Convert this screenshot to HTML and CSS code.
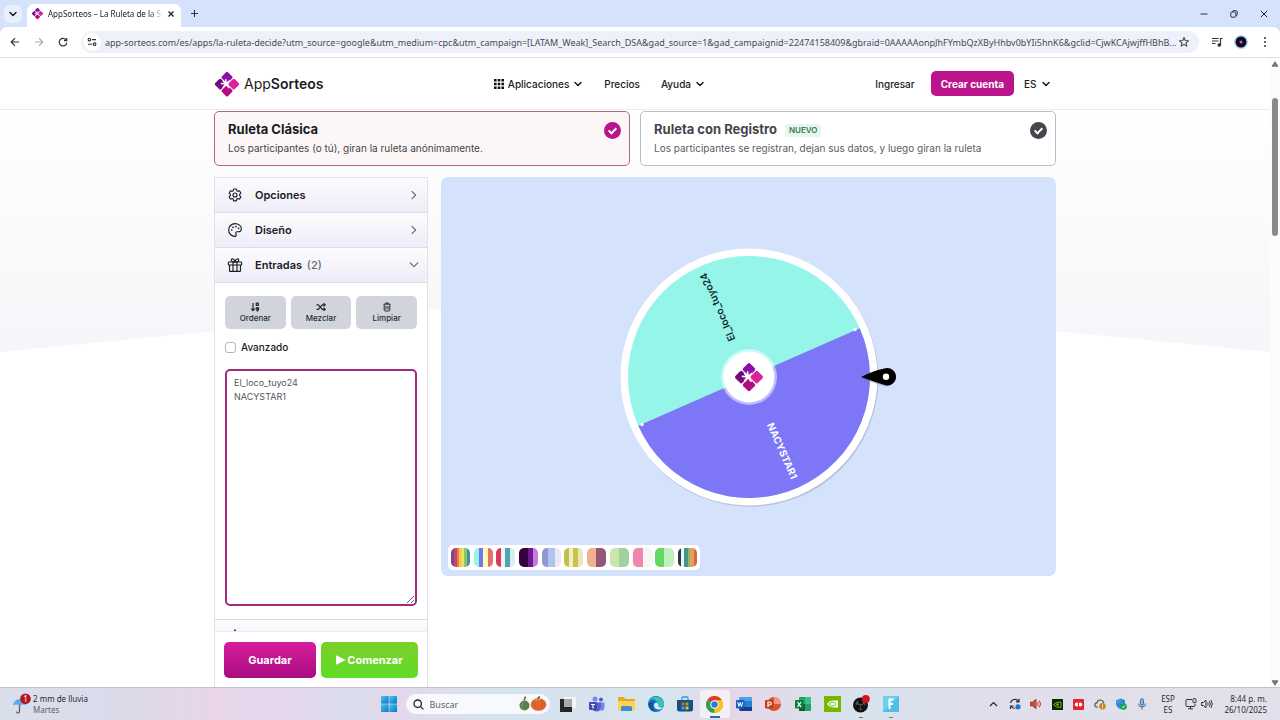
FILE: index.html
```html
<!DOCTYPE html>
<html lang="es">
<head>
<meta charset="utf-8">
<title>AppSorteos – La Ruleta de la Suerte</title>
<link rel="stylesheet" href="styles.css">
</head>
<body>
<svg class="defs" aria-hidden="true">
  <defs>
    <linearGradient id="g-top" x1="0" y1="0" x2="1" y2="1"><stop offset="0" stop-color="#7d0aa0"/><stop offset="1" stop-color="#a312b4"/></linearGradient>
    <linearGradient id="g-left" x1="0" y1="0" x2="1" y2="1"><stop offset="0" stop-color="#5c0a73"/><stop offset="1" stop-color="#8c0d86"/></linearGradient>
    <linearGradient id="g-blue" x1="0" y1="0" x2="1" y2="1"><stop offset="0" stop-color="#45c8f1"/><stop offset="1" stop-color="#0a74c8"/></linearGradient>
    <symbol id="logo" viewBox="0 0 28 28">
      <g transform="rotate(45 14 14)">
        <rect x="5" y="5" width="8.6" height="8.6" rx="1.6" fill="url(#g-top)"/>
        <rect x="14.6" y="5" width="8.6" height="8.6" rx="1.6" fill="#dc229c"/>
        <rect x="5" y="14.6" width="8.6" height="8.6" rx="1.6" fill="url(#g-left)"/>
        <rect x="14.6" y="14.6" width="8.6" height="8.6" rx="1.6" fill="#b20c82"/>
      </g>
      <path d="M12.8 14V9.8M12.8 14l3.4-3M12.8 14l3 3.6M12.8 14l-2.600 3.400M12.8 14l-4.4-.6M12.8 14l-2.600-3" stroke="#fff" stroke-width="1.5" stroke-linecap="round" fill="none"/>
    </symbol>
    <symbol id="chev-down" viewBox="0 0 10 10"><path d="M2 3.5 5 6.5 8 3.5" fill="none" stroke="currentColor" stroke-width="1.5" stroke-linecap="round" stroke-linejoin="round"/></symbol>
    <symbol id="chev-thin" viewBox="0 0 12 12"><path d="M4 2.300 7.700 6 4 9.700" fill="none" stroke="currentColor" stroke-width="1.1" stroke-linecap="round" stroke-linejoin="round"/></symbol>
  </defs>
</svg>

<header class="browser">
  <div class="tabstrip">
    <button class="tab-search" aria-label="Buscar pestañas"><svg width="10" height="10"><use href="#chev-down"/></svg></button>
    <div class="tab">
      <svg width="13" height="13"><use href="#logo"/></svg>
      <span class="tab-title">AppSorteos – La Ruleta de la Su</span>
      <button class="plain" aria-label="Cerrar pestaña"><svg width="8" height="8" viewBox="0 0 8 8"><path d="M1.5 1.5l5 5M6.5 1.5l-5 5" stroke="#222" stroke-width="1.3"/></svg></button>
    </div>
    <button class="plain new-tab" aria-label="Nueva pestaña"><svg width="9" height="9" viewBox="0 0 9 9"><path d="M4.5 1v7M1 4.5h7" stroke="#333" stroke-width="1.1"/></svg></button>
    <div class="win-controls">
      <button class="plain" aria-label="Minimizar"><svg width="8" height="8" viewBox="0 0 8 8"><path d="M.5 4h7" stroke="#333"/></svg></button>
      <button class="plain" aria-label="Restaurar"><svg width="8" height="8" viewBox="0 0 8 8" fill="none" stroke="#333"><rect x=".8" y="2" width="5" height="5.2" rx="1"/><path d="M2.5 1.8Q2.6.6 4 .6h1.5q1.8 0 1.8 1.8V4q0 1.5-1.3 1.6"/></svg></button>
      <button class="plain" aria-label="Cerrar"><svg width="8" height="8" viewBox="0 0 8 8"><path d="M.8.8l6.4 6.4M7.2.8L.8 7.2" stroke="#222"/></svg></button>
    </div>
  </div>
  <div class="toolbar">
    <div class="nav-buttons">
      <button class="plain" aria-label="Atrás"><svg width="10" height="10" viewBox="0 0 10 10"><path d="M9 5H1.4M5 1.2 1.2 5 5 8.8" fill="none" stroke="#333" stroke-width="1.2"/></svg></button>
      <button class="plain" aria-label="Adelante"><svg width="10" height="10" viewBox="0 0 10 10"><path d="M1 5h7.6M5 1.2 8.8 5 5 8.8" fill="none" stroke="#aaa" stroke-width="1.1"/></svg></button>
      <button class="plain" aria-label="Recargar"><svg width="10" height="10" viewBox="0 0 10 10"><path d="M8.3 3.2A3.8 3.8 0 1 0 8.8 5.6M8.7 1v2.7H6" fill="none" stroke="#333" stroke-width="1.2"/></svg></button>
    </div>
    <div class="omnibox">
      <span class="site-info"><svg width="10" height="10" viewBox="0 0 10 10" fill="none" stroke="#333" stroke-width="1.1"><circle cx="2.4" cy="2.6" r="1.3"/><path d="M5 2.6h4M1 7.2h4"/><circle cx="7.6" cy="7.2" r="1.3"/></svg></span>
      <input class="url" type="text" aria-label="Dirección" value="app-sorteos.com/es/apps/la-ruleta-decide?utm_source=google&amp;utm_medium=cpc&amp;utm_campaign=[LATAM_Weak]_Search_DSA&amp;gad_source=1&amp;gad_campaignid=22474158409&amp;gbraid=0AAAAAonpJhFYmbQzXByHhbv0bYIi5hnK6&amp;gclid=CjwKCAjwjffHBhB...">
      <button class="plain" aria-label="Marcador"><svg width="12" height="12" viewBox="0 0 12 12"><path d="M6 1.5l1.3 3 3.2.3-2.4 2.1.7 3.2L6 8.4l-2.8 1.7.7-3.2L1.500 4.800l3.200-.3z" fill="none" stroke="#444" stroke-width="1.1" stroke-linejoin="round"/></svg></button>
    </div>
    <div class="tool-icons">
      <button class="plain" aria-label="Multimedia"><svg width="12" height="12" viewBox="0 0 12 12" fill="none" stroke="#333" stroke-width="1.2"><path d="M1 2.500h6.500M1 5h6.500M1 7.500h3.500M9.500 9V2.500h2"/><circle cx="8.300" cy="9" r="1.200" fill="#333"/></svg></button>
      <button class="plain" aria-label="Perfil"><svg width="14" height="14" viewBox="0 0 14 14"><circle cx="7" cy="7" r="7" fill="#bcd3f4"/><circle cx="7" cy="7" r="5.500" fill="#0b0b22"/><circle cx="7" cy="7" r="1.500" fill="#e25a8a"/></svg></button>
      <button class="plain" aria-label="Menú"><svg width="12" height="12" viewBox="0 0 12 12" fill="#333"><circle cx="6" cy="2" r="1"/><circle cx="6" cy="6" r="1"/><circle cx="6" cy="10" r="1"/></svg></button>
    </div>
  </div>
</header>

<div class="viewport">
  <div class="page">
    <header class="site-header">
      <div class="container site-bar">
        <a class="brand" href="#"><svg width="26" height="26" viewBox="1 1 26 26"><use href="#logo" width="28" height="28"/></svg><span>App<b>Sorteos</b></span></a>
        <nav class="site-nav">
          <a href="#"><svg width="10" height="10" viewBox="0 0 10 10" fill="#111"><path d="M0 0h2.600v2.600H0zM3.700 0h2.600v2.600H3.700zM7.400 0H10v2.600H7.400zM0 3.700h2.600v2.600H0zM3.700 3.700h2.600v2.600H3.700zM7.400 3.700H10v2.600H7.400zM0 7.400h2.600V10H0zM3.700 7.400h2.600V10H3.700zM7.400 7.400H10V10H7.400z"/></svg>Aplicaciones<svg width="10" height="10"><use href="#chev-down"/></svg></a>
          <a href="#">Precios</a>
          <a href="#">Ayuda<svg width="10" height="10"><use href="#chev-down"/></svg></a>
        </nav>
        <div class="account">
          <a href="#">Ingresar</a>
          <button class="signup">Crear cuenta</button>
          <label class="lang"><select aria-label="Idioma"><option>ES</option></select><svg width="10" height="10"><use href="#chev-down"/></svg></label>
        </div>
      </div>
    </header>

    <main class="container content">
      <div class="modes">
        <label class="mode mode-active">
          <span class="mode-text"><span class="mode-title">Ruleta Clásica</span><span class="mode-desc">Los participantes (o tú), giran la ruleta anónimamente.</span></span>
          <input type="radio" name="mode" checked>
        </label>
        <label class="mode">
          <span class="mode-text"><span class="mode-title">Ruleta con Registro <span class="tag">NUEVO</span></span><span class="mode-desc">Los participantes se registran, dejan sus datos, y luego giran la ruleta</span></span>
          <input type="radio" name="mode">
        </label>
      </div>

      <div class="workspace">
        <aside class="sidebar">
          <div class="sections">
            <button class="section" aria-expanded="false">
              <svg width="16" height="16" viewBox="0 0 24 24" fill="none" stroke="currentColor" stroke-width="1.700" stroke-linejoin="round"><path d="M9.600 3.900c.1-.5.500-.9 1.100-.9h2.600c.5 0 1 .4 1.100.9l.2 1.300c.1.400.3.700.6.900l.3.100c.3.200.7.200 1.100.1l1.200-.5c.5-.2 1.100 0 1.400.5l1.300 2.200c.3.500.2 1.100-.3 1.400l-1 .8c-.3.300-.4.600-.4 1v.300c0 .400.100.700.400 1l1 .8c.4.400.5 1 .3 1.400l-1.300 2.300c-.3.500-.9.700-1.400.5l-1.200-.5c-.4-.1-.8-.1-1.100.1l-.3.100c-.3.200-.6.500-.6.900l-.2 1.300c-.1.500-.6.900-1.100.9h-2.600c-.6 0-1-.4-1.100-.9l-.2-1.300c-.1-.4-.3-.7-.6-.9l-.3-.1c-.3-.2-.7-.2-1.100-.1l-1.200.5c-.5.200-1.100 0-1.400-.5l-1.300-2.300c-.3-.4-.2-1 .3-1.400l1-.8c.3-.3.400-.6.400-1v-.300c0-.4-.1-.7-.4-1l-1-.8c-.4-.3-.5-.9-.3-1.400l1.300-2.200c.3-.5.900-.7 1.400-.5l1.200.5c.4.100.8.100 1.100-.1l.3-.1c.3-.2.600-.5.600-.9z"/><circle cx="12" cy="12" r="3"/></svg>
              <span>Opciones</span><svg class="arrow" width="12" height="12"><use href="#chev-thin"/></svg>
            </button>
            <button class="section" aria-expanded="false">
              <svg width="16" height="16" viewBox="0 0 24 24" fill="none" stroke="currentColor" stroke-width="1.700" stroke-linejoin="round"><path d="M12 21.500C6.500 21.500 2.500 17.300 2.500 12S6.800 2.500 12 2.500s9.500 3.400 9.500 7.600c0 2.700-1.900 4.600-4.700 4.600H15c-1.500 0-2.200 1.100-1.800 2.300.3 1 .8 1.600.5 2.900-.2 1-.8 1.600-1.700 1.600z"/><g fill="currentColor" stroke="none"><circle cx="7" cy="12" r="1.300"/><circle cx="9" cy="8" r="1.300"/><circle cx="13.500" cy="6.800" r="1.300"/><circle cx="17.300" cy="9.500" r="1.300"/></g></svg>
              <span>Diseño</span><svg class="arrow" width="12" height="12"><use href="#chev-thin"/></svg>
            </button>
            <button class="section" aria-expanded="true">
              <svg width="16" height="16" viewBox="0 0 24 24" fill="none" stroke="currentColor" stroke-width="1.700" stroke-linejoin="round"><rect x="2" y="7.500" width="20" height="4.500" rx="1"/><path d="M3.800 12v8.500q0 1 1 1h14.400q1 0 1-1V12M9 7.500v14M15 7.500v14M12 7.500C7 7.500 6 5.500 6.500 4S11 1.500 12 7.500c1-6 5-5 5.500-3.500S17 7.500 12 7.500z"/></svg>
              <span>Entradas <span class="count">(2)</span></span><svg class="arrow open" width="12" height="12"><use href="#chev-thin"/></svg>
            </button>
            <div class="entries">
              <div class="actions">
                <button><svg width="10" height="10" viewBox="0 0 10 10" fill="none" stroke="#1f2937" stroke-width="1.200"><path d="M3 1v7.500M1.200 6.600 3 8.600l1.800-2"/><rect x="6.300" y="1.200" width="2" height="2.200"/><path d="M6.300 8.800h1q1.200 0 1.200-1.300V5.800H6.300v1.400h2"/></svg>Ordenar</button>
                <button><svg width="10" height="10" viewBox="0 0 10 10" fill="none" stroke="#1f2937" stroke-width="1.200"><path d="M.5 2.800h1.800l4 4.500h2.500M.5 7.300h1.800l4-4.500h2.500M7.600 1.200l1.600 1.600-1.600 1.600M7.600 5.700l1.600 1.600-1.600 1.600"/></svg>Mezclar</button>
                <button><svg width="10" height="10" viewBox="0 0 10 10" fill="none" stroke="#1f2937"><path d="M1.500 2.200h7M3.600 2V1h2.800v1M2.200 2.500V8q0 1 1 1h3.600q1 0 1-1V2.500M4 4v3.500M6 4v3.500"/></svg>Limpiar</button>
              </div>
              <label class="advanced"><input type="checkbox">Avanzado</label>
              <textarea aria-label="Entradas" spellcheck="false">El_loco_tuyo24
NACYSTAR1</textarea>
            </div>
            <button class="section section-next" aria-expanded="false">
              <svg width="16" height="16" viewBox="0 0 24 24" fill="none" stroke="currentColor" stroke-width="1.700"><path d="M12 1.500l3 6.500 7 .8-5.200 4.700 1.400 7L12 17l-6.200 3.500 1.400-7L2 8.800 9 8z"/></svg>
              <span>Resultados <span class="count">(0)</span></span>
            </button>
          </div>
          <div class="footer-actions">
            <button class="save">Guardar</button>
            <button class="start"><svg width="9" height="10" viewBox="0 0 9 10"><path d="M.5.8v8.400L8.600 5z" fill="#fff" stroke="#fff" stroke-linejoin="round"/></svg>Comenzar</button>
          </div>
        </aside>

        <section class="stage" aria-label="Ruleta">
          <svg class="wheel" width="300" height="268" viewBox="-150 -134 300 268">
            <circle cx="1" cy="1.300" r="128.500" fill="#8d9bb5" opacity=".45"/>
            <circle r="128.500" fill="#fff"/>
            <circle r="121" fill="#95f5e9"/>
            <path d="M-110.710 48.830A121 121 0 0 0 110.710-48.830z" fill="#7d77f8"/>
            <circle cx="-107" cy="47.500" r="1.700" fill="#fff"/><circle cx="106" cy="-47.500" r="1.700" fill="#fff"/>
            <g class="wheel-text">
              <text transform="rotate(-113.800)" x="40" y="3" fill="#10262c">El_loco_tuyo24</text>
              <text class="bold" transform="rotate(66.200)" x="51" y="3" fill="#fff">NACYSTAR1</text>
            </g>
            <circle r="28" fill="#fff" opacity=".5"/>
            <circle r="25.500" fill="#fff"/>
            <use href="#logo" x="-16" y="-16" width="32" height="32"/>
            <path d="M113 1.500Q127-8 137-8.400A8.500 8.500 0 0 1 137 9.500Q127 7 113 1.500z" fill="#667" opacity=".4" />
            <path d="M112 0Q126-7 136.500-8.700A8.700 8.700 0 1 1 136.500 8.300Q126 5 112 0z" fill="#000"/>
            <circle cx="137" cy="-.3" r="3.200" fill="#fff"/>
          </svg>
          <div class="palettes">
            <button class="swatch p1" aria-label="Paleta 1"></button><button class="swatch p2" aria-label="Paleta 2"></button><button class="swatch p3" aria-label="Paleta 3"></button><button class="swatch p4" aria-label="Paleta 4"></button><button class="swatch p5" aria-label="Paleta 5"></button><button class="swatch p6" aria-label="Paleta 6"></button><button class="swatch p7" aria-label="Paleta 7"></button><button class="swatch p8" aria-label="Paleta 8"></button><button class="swatch p9" aria-label="Paleta 9"></button><button class="swatch p10" aria-label="Paleta 10"></button><button class="swatch p11" aria-label="Paleta 11"></button>
          </div>
        </section>
      </div>
    </main>
  </div>
  <div class="scrollbar" aria-hidden="true">
    <svg width="8" height="6" viewBox="0 0 8 6"><path d="M4 .8 7 5.200H1z" fill="#777" stroke="#777" stroke-linejoin="round"/></svg>
    <div class="track"><div class="thumb"></div></div>
    <svg width="8" height="6" viewBox="0 0 8 6"><path d="M4 5.200 7 .8H1z" fill="#777" stroke="#777" stroke-linejoin="round"/></svg>
  </div>
</div>

<footer class="taskbar">
  <div class="weather">
    <svg width="20" height="22" viewBox="0 0 20 22"><path d="M1 12.500Q2 6 8 6t6 6.500Q11 10.500 8 12.500 4.500 10.500 1 12.500z" fill="#5fa9ea"/><path d="M7.500 12v6.500q0 1.500-1.500 1.500T4.700 18.500" fill="none" stroke="#555" stroke-width="1.200"/><circle cx="13.500" cy="5.800" r="5.300" fill="#b3151d"/><text x="13.500" y="9" text-anchor="middle" class="badge-num">1</text></svg>
    <div class="two-line"><span>2 mm de lluvia</span><span class="dim">Martes</span></div>
  </div>
  <div class="dock">
    <button class="plain start-btn" aria-label="Inicio"><svg width="16" height="16" viewBox="0 0 16 16" fill="url(#g-blue)"><rect width="7.700" height="7.700" rx=".6"/><rect x="8.300" width="7.700" height="7.700" rx=".6"/><rect y="8.300" width="7.700" height="7.700" rx=".6"/><rect x="8.300" y="8.300" width="7.700" height="7.700" rx=".6"/></svg></button>
    <label class="search">
      <svg width="11" height="11" viewBox="0 0 11 11" fill="none" stroke="#222" stroke-width="1.300"><circle cx="4.700" cy="4.700" r="3.700"/><path d="M7.400 7.400l3 3"/></svg>
      <input type="search" placeholder="Buscar" aria-label="Buscar">
      <svg width="28" height="16" viewBox="0 0 28 16"><path d="M5.500 4.500Q5 1.500 7 1" stroke="#5c6b3a" stroke-width="1.500" fill="none"/><ellipse cx="5.500" cy="9.500" rx="5" ry="5" fill="#5d7d4e"/><path d="M3.500 5.500Q2.500 10 4 14" stroke="#7d9865" fill="none"/><ellipse cx="19.500" cy="8.500" rx="7.800" ry="6.300" fill="#e0672b"/><path d="M17 4q-3 4 0 8M22 4q3 4 0 8" stroke="#cc5720" fill="none"/><path d="M16 5q2-2 5-1.500" stroke="#f3a05e" fill="none"/><path d="M19 3Q19 1 21 1" stroke="#50613a" stroke-width="1.500" fill="none"/></svg>
    </label>
    <div class="apps">
      <button class="plain" aria-label="Vista de tareas"><svg width="16" height="16" viewBox="0 0 16 16"><rect x="4" y="1" width="12" height="11" fill="#f5f5f5"/><rect x="0" y="3" width="12" height="13" fill="#262626"/><rect x="4" y="3" width="8" height="8" fill="#a9a9a9"/></svg></button>
      <button class="plain" aria-label="Teams"><svg width="16" height="16" viewBox="0 0 16 16"><circle cx="6" cy="3" r="2.500" fill="#7b83eb"/><circle cx="12" cy="3.500" r="2" fill="#5059c9"/><path d="M9 6.500h6.500v5q0 3-3.500 3.500z" fill="#7b83eb"/><path d="M3 6.500h9V11q0 4.500-4.500 4.500T3 11z" fill="#5c62d6"/><rect x="0" y="6" width="8" height="8" rx="1" fill="#4148b3"/><path d="M2 8.500h4M4 8.500v4" stroke="#fff" stroke-width="1.200"/></svg></button>
      <button class="plain" aria-label="Explorador"><svg width="17" height="16" viewBox="0 0 17 16"><path d="M0 2q0-1 1-1h4.500l2 2H16q1 0 1 1v10H0z" fill="#e9a91f"/><path d="M0 5h17v9q0 1-1 1H1q-1 0-1-1z" fill="#fcd354"/><path d="M3 15v-3.500q0-1.500 1.500-1.500h8q1.500 0 1.500 1.500V15z" fill="#3b8fd6"/></svg></button>
      <button class="plain" aria-label="Edge"><svg width="16" height="16" viewBox="0 0 16 16"><circle cx="8" cy="8" r="8" fill="#1278c9"/><path d="M.3 7A8 8 0 0 1 16 7.500Q16 11 12 11q-3 0-2.500-1.500Q10.500 8 9 6 5-.5.3 7z" fill="#38c8b0"/><path d="M.2 8Q2 4.500 6 6 2.500 10 8 15.500q-7 0-7.800-7.500z" fill="#0d55a3"/><path d="M9.800 10Q11 8 8.500 6.500 5.500 7 6 10q1 4 6 3.500 2-.5 3-2-3 .5-5.200-1.500z" fill="#d9edf8"/></svg></button>
      <button class="plain" aria-label="Store"><svg width="16" height="16" viewBox="0 0 16 16"><path d="M5 4V2q0-1 1-1h4q1 0 1 1v2" fill="none" stroke="#2a9fd8" stroke-width="1.300"/><path d="M0 4h16v9q0 2.500-2.500 2.500h-11Q0 15.500 0 13z" fill="#174f7e"/><path d="M4.500 6.500h3v3h-3z" fill="#f05133"/><path d="M8.500 6.500h3v3h-3z" fill="#82b92f"/><path d="M4.500 10.500h3v3h-3z" fill="#2aa5e5"/><path d="M8.500 10.500h3v3h-3z" fill="#f8bb26"/></svg></button>
      <button class="plain current" aria-label="Chrome"><svg width="17" height="17" viewBox="0 0 16 16"><path d="M8 8 1.070 4A8 8 0 0 1 14.930 4z" fill="#e33b2e"/><path d="M8 8 14.930 4A8 8 0 0 1 8 16z" fill="#fbc116"/><path d="M8 8V16A8 8 0 0 1 1.070 4z" fill="#2ba24c"/><path d="M8 4h6.930A8 8 0 0 1 8 16l3.500-6z" fill="#fbc116"/><circle cx="8" cy="8" r="4" fill="#fff"/><circle cx="8" cy="8" r="3" fill="#2f78e4"/></svg></button>
      <button class="plain" aria-label="Word"><svg width="16" height="16" viewBox="0 0 16 16"><rect x="3.500" y="1" width="12.500" height="14" rx="1" fill="#2b7cd3"/><path d="M3.500 1H16v4H3.500z" fill="#41a5ee"/><path d="M3.500 11H16v4H3.500z" fill="#103f91"/><rect y="4" width="8.500" height="8.500" rx="1" fill="#185abd"/><path d="M1.700 6l1.200 4.500L4.200 6.500l1.300 4L6.800 6" stroke="#fff" fill="none"/></svg></button>
      <button class="plain" aria-label="PowerPoint"><svg width="16" height="16" viewBox="0 0 16 16"><circle cx="9" cy="8" r="7" fill="#d5553a"/><path d="M9 1a7 7 0 0 1 7 7H9z" fill="#f09b7c"/><rect y="4" width="8.500" height="8.500" rx="1" fill="#c43e1c"/><path d="M3 11V6h1.700q1.500 0 1.500 1.500T4.700 9H3" stroke="#fff" stroke-width="1.200" fill="none"/></svg></button>
      <button class="plain" aria-label="Excel"><svg width="16" height="16" viewBox="0 0 16 16"><rect x="4" y="1" width="12" height="14" rx="1" fill="#21a366"/><path d="M10 1h6v7h-6z" fill="#33c481"/><path d="M4 8h6v7H4z" fill="#185c37"/><rect y="4" width="8.500" height="8.500" rx="1" fill="#107c41"/><path d="M2.500 6l3.500 4.800M6 6l-3.500 4.800" stroke="#fff" stroke-width="1.200"/></svg></button>
      <button class="plain" aria-label="NVIDIA"><svg width="17" height="16" viewBox="0 0 17 16"><rect width="17" height="16" fill="#74b900"/><path d="M3 8q2.500-3.300 5.500-3.500H14v7H8.500Q5 11 3 8z" fill="#fff"/><path d="M5 8q2-2 4-2 2 .5 3 2-1.300 2-3 2Q6.500 10 5 8z" fill="none" stroke="#74b900"/></svg></button>
      <button class="plain running" aria-label="OBS"><svg width="17" height="18" viewBox="0 0 17 18"><circle cx="7.500" cy="10" r="7.500" fill="#111"/><circle cx="7.500" cy="10" r="5" fill="#55555c"/><circle cx="7.500" cy="6.800" r="2.500" fill="#111"/><circle cx="4.800" cy="12" r="2.500" fill="#111"/><circle cx="10.300" cy="12" r="2.500" fill="#111"/><circle cx="12.800" cy="4" r="4" fill="#e0101a"/></svg></button>
      <button class="plain running" aria-label="Filmora"><svg width="16" height="16" viewBox="0 0 16 16"><rect width="16" height="16" fill="#69d2ec"/><path d="M0 16 16 0v16z" fill="#4fbfe2"/><path d="M6.500 13V3.500h4M6.500 8h3.500" stroke="#fff" stroke-width="2" fill="none"/></svg></button>
    </div>
  </div>
  <div class="tray">
    <div class="tray-icons">
      <svg width="9" height="9" viewBox="0 0 9 9"><path d="M1 6l3.500-3.500L8 6" fill="none" stroke="#222" stroke-width="1.100"/></svg>
      <svg width="12" height="12" viewBox="0 0 12 12" fill="none" stroke="#333" stroke-width="1.200"><path d="M1.500 5A4.500 4.500 0 0 1 9.500 3.200M10 .8v3H7M6 10.500A4.500 4.500 0 0 1 2 8M1.500 11V8h3"/><circle cx="9" cy="8.800" r="2.600" fill="#1676d2" stroke="none"/></svg>
      <svg width="12" height="12" viewBox="0 0 12 12" fill="none" stroke="#c0392b"><path d="M.5 4h2.300L6 1.200v9.600L2.800 8H.5z" fill="#b0574c"/><path d="M7.500 4q1.500 2 0 4M9.300 2.500q2.500 3.500 0 7"/></svg>
      <svg width="11" height="11" viewBox="0 0 11 11"><rect width="11" height="11" fill="#14200f"/><path d="M1.500 5.500Q4 2.500 9 3v5.500Q4 9 1.500 5.500z" fill="none" stroke="#76b900"/><circle cx="5.500" cy="5.600" r="1.300" fill="#76b900"/></svg>
      <svg width="11" height="11" viewBox="0 0 11 11"><rect width="11" height="11" rx="1" fill="#e5232e"/><circle cx="3.800" cy="5.500" r="2" fill="#fff"/><circle cx="7.200" cy="5.500" r="2" fill="#fff"/><path d="M5.500 3.500v4" stroke="#e5232e"/></svg>
      <svg width="12" height="12" viewBox="0 0 12 12"><path d="M4 9H3Q.8 9 .8 7T3 4.800Q3.500 2 6.200 2t3.500 2.800" fill="none" stroke="#555" stroke-width="1.200"/><circle cx="8.500" cy="8.300" r="3.200" fill="#c08a15"/><path d="M8.500 6.500v2M8.500 9.200v1" stroke="#fff"/></svg>
      <svg width="12" height="12" viewBox="0 0 12 12"><path d="M5.500.5l4.500 1.700v3q0 3.800-4.500 5.800Q1 9 1 5.200v-3z" fill="#3c9be2"/><path d="M5.500.5v10.500Q1 9 1 5.200h9v-3z" fill="#2278c8" opacity=".5"/><circle cx="8.500" cy="8.500" r="3.300" fill="#18a34a"/><path d="M7 8.500l1.200 1.200L10 7.500" stroke="#fff" fill="none"/></svg>
      <svg width="10" height="12" viewBox="0 0 10 12" fill="none" stroke="#356aa0"><rect x="3.500" y=".8" width="3" height="6.500" rx="1.500" fill="#8fbce6"/><path d="M1.500 5.500q0 3.500 3.500 3.500t3.500-3.500M5 9v2.500"/></svg>
    </div>
    <div class="two-line kb"><span>ESP</span><span>ES</span></div>
    <svg width="12" height="12" viewBox="0 0 12 12" fill="none" stroke="#333"><path d="M7 1.500H2q-1 0-1 1v5q0 1 1 1h7q1 0 1-1V6M3 10.800h5M5.500 8.500v2.300"/><rect x="8" y=".7" width="3" height="4" rx=".6"/></svg>
    <svg width="12" height="10" viewBox="0 0 12 10" fill="none" stroke="#333"><path d="M.6 3.500h1.800L5 1.200v7.600L2.400 6.500H.6zM6.700 3.500q1 1.500 0 3M8.300 2.200q2 2.800 0 5.600M9.900 1q2.800 4 0 8"/></svg>
    <div class="two-line clock"><span>8:44 p. m.</span><span>26/10/2025</span></div>
  </div>
</footer>
</body>
</html>
```
FILE: styles.css
```css
* { box-sizing: border-box; }
body {
  margin: 0;
  height: 100vh;
  display: flex;
  flex-direction: column;
  overflow: hidden;
  font-family: Inter, "Liberation Sans", sans-serif;
  font-size: 11px;
  color: #1b1b22;
  background: #fff;
}
button, input, select, textarea { font: inherit; color: inherit; }
button { cursor: pointer; padding: 0; border: 0; }
a { color: inherit; text-decoration: none; }
svg { display: block; flex: none; }
.defs { position: absolute; width: 0; height: 0; }
.plain { display: flex; align-items: center; justify-content: center; background: none; }

/* Browser chrome */
.browser { flex: none; background: #d6e2fb; font-family: "Noto Sans", sans-serif; }
.tabstrip { display: flex; align-items: center; height: 27px; padding-left: 4px; }
.tab-search { display: flex; align-items: center; justify-content: center; width: 18px; height: 18px; border-radius: 6px; background: #e9f0fd; }
.tab { align-self: flex-end; display: flex; align-items: center; gap: 4px; width: 154px; height: 23px; margin-left: 5px; padding: 0 6px 4px 4px; border-radius: 7px 7px 0 0; background: #fff; }
.tab-title { flex: 1; min-width: 0; white-space: nowrap; font-size: 8px; mask-image: linear-gradient(90deg, #000 88%, transparent); }
.new-tab { margin-left: 9px; }
.win-controls { display: flex; gap: 22px; margin-left: auto; padding-right: 12px; }
.toolbar { display: flex; align-items: center; height: 31px; padding: 0 9px 0 10px; border-radius: 7px 7px 0 0; border-bottom: 1px solid #dfe3e8; background: #fff; }
.nav-buttons { display: flex; gap: 14px; width: 71px; }
.omnibox { flex: 1; display: flex; align-items: center; height: 22px; padding: 0 9px 0 2px; border-radius: 11px; background: #eef1fa; }
.site-info { display: flex; align-items: center; justify-content: center; width: 18px; height: 18px; border-radius: 50%; background: #fff; }
.url { flex: 1; min-width: 0; padding: 0 0 0 4px; border: 0; background: none; font-size: 9px; color: #474b50; outline: 0; }
.tool-icons { display: flex; align-items: center; gap: 11px; margin-left: 12px; }

/* Page viewport */
.viewport { flex: 1; min-height: 0; display: flex; }
.page {
  flex: 1;
  min-width: 0;
  display: flex;
  flex-direction: column;
  position: relative;
  isolation: isolate;
}
.page::before {
  content: "";
  position: absolute;
  inset: 0 0 auto;
  height: 294px;
  z-index: -1;
  background: linear-gradient(#fff 15%, #f6f6fa);
  clip-path: polygon(0 0, 100% 0, 100% 100%, 50% 79%, 0 100%);
}
.container { width: 100%; max-width: 842px; margin: 0 auto; }
.site-header { flex: none; border-bottom: 1px solid #ececf0; background: #fff; }
.site-bar { display: flex; align-items: center; justify-content: space-between; height: 51px; padding-right: 5px; font-size: 10px; font-weight: 500; }
.brand { display: flex; align-items: center; gap: 4px; font-size: 14px; font-weight: 400; }
.brand b { font-weight: 600; }
.site-nav, .site-nav a, .account, .lang { display: flex; align-items: center; }
.site-nav { gap: 21px; }
.site-nav a { gap: 4px; }
.account { gap: 10px; }
.signup { height: 25px; margin-left: 6px; padding: 0 10px; border-radius: 5px; background: #bb148d; color: #fff; font-weight: 700; }
.lang { gap: 4px; }
.lang select { appearance: none; padding: 0; border: 0; background: none; }

.content { flex: 1; min-height: 0; display: flex; flex-direction: column; gap: 11px; padding-top: 1px; }
.modes { display: grid; grid-template-columns: 1fr 1fr; gap: 10px; }
.mode { display: flex; align-items: flex-start; justify-content: space-between; height: 55px; padding: 9px 8px 0 13px; border: 1px solid #bdbdc4; border-radius: 5px; background: #fff; color: #45464d; }
.mode-active { border-color: #b0658f; background: #fcf6f7; color: #1b1b22; }
.mode-text, .mode-title { display: flex; }
.mode-text { flex-direction: column; gap: 4px; }
.mode-title { align-items: center; gap: 8px; font-size: 13px; line-height: 16px; font-weight: 700; }
.mode-desc { font-size: 10px; line-height: 14px; color: #5b5c64; }
.mode-active .mode-desc { color: #44454c; }
.tag { align-self: flex-end; padding: 0 4px; border-radius: 3px; background: #e2f9ec; color: #43745e; font-size: 8px; line-height: 13px; font-weight: 600; }
.mode input { appearance: none; display: flex; justify-content: center; flex: none; width: 17px; height: 17px; margin: 1px 0 0; padding-top: 4px; border-radius: 50%; background: #45464f; }
.mode input:checked { background: #b8148b; }
.mode input::before { content: ""; box-sizing: border-box; width: 5px; height: 8px; border: solid #fff; border-width: 0 2px 2px 0; transform: rotate(45deg); }

.workspace { flex: 1; min-height: 0; display: grid; grid-template-columns: 214px 1fr; gap: 13px; }
.sidebar { display: flex; flex-direction: column; min-height: 0; border: solid #e2e2ea; border-width: 1px 1px 0; background: #fff; }
.sections { flex: 1; min-height: 0; overflow: hidden; }
.section { display: flex; align-items: center; gap: 12px; width: 100%; height: 35px; padding: 0 7px 0 12px; border-bottom: 1px solid #dcdce6; background: linear-gradient(#fcfcfe, #eeecf8); font-weight: 600; text-align: left; }
.section .arrow { margin-left: auto; color: #6a6b74; }
.section .open { transform: rotate(90deg); }
.count { margin-left: 2px; color: #6b6c75; font-weight: 500; }
.section-next { border-top: 1px solid #dcdce6; }
.entries { padding: 13px 10px; }
.actions { display: grid; grid-template-columns: 1fr 1fr 1fr; gap: 5px; }
.actions button { display: flex; flex-direction: column; align-items: center; justify-content: center; gap: 1px; height: 33px; border-radius: 5px; background: #d1d5db; color: #1f2937; font-size: 8px; line-height: 10px; font-weight: 500; }
.advanced { display: flex; align-items: center; gap: 5px; height: 16px; margin: 10px 0 14px; font-size: 10px; font-weight: 500; }
.advanced input { appearance: none; width: 11px; height: 11px; margin: 0; border: 1px solid #b5b5bd; border-radius: 3px; background: #fff; }
textarea { display: block; width: 100%; height: 237px; padding: 5px 7px; border: 2px solid #a3297f; border-radius: 5px; background: #fff; color: #55565e; font-size: 9px; line-height: 14px; outline: 0; }
.footer-actions { display: grid; grid-template-columns: 92px 1fr; gap: 5px; padding: 10px 9px 9px; border-top: 1px solid #ececf2; background: #fff; }
.footer-actions button { display: flex; align-items: center; justify-content: center; gap: 2px; height: 36px; border-radius: 5px; color: #fff; font-weight: 700; }
.save { background: linear-gradient(#d61d9d, #a90c80); }
.start { background: linear-gradient(#7ccf2c, #60dc26); }

.stage { position: relative; align-self: start; display: flex; align-items: center; justify-content: center; aspect-ratio: 615 / 399; border-radius: 7px; background: #d5e2fc; }
.wheel-text { font-size: 10px; font-weight: 600; }
.bold { font-weight: 700; }
.palettes { position: absolute; left: 7px; bottom: 6px; display: flex; align-items: center; justify-content: space-between; width: 252px; height: 25px; padding: 0 3px; border-radius: 5px; background: #fff; }
.swatch { width: 19px; height: 19px; border-radius: 5px; }
.p1 { background: linear-gradient(90deg, #79459b 15%, #c24a5c 15% 30%, #ec7b49 30% 43%, #f5c953 43% 57%, #dced62 57% 71%, #86c966 71% 85%, #4590a8 85%); }
.p2 { background: linear-gradient(90deg, #95f5e9 27%, #7476ee 27% 50%, #fffab0 50% 75%, #e5716e 75%); }
.p3 { background: linear-gradient(90deg, #d83b59 25%, #eef3f4 25% 49%, #4ca5b3 49% 75%, #dbecf1 75%); }
.p4 { background: linear-gradient(90deg, #35033f 48%, #6c1b91 48% 73%, #c77bdc 73%); }
.p5 { background: linear-gradient(90deg, #9297d4 33%, #aec4ee 33% 66%, #eee8f5 66%); }
.p6 { background: linear-gradient(90deg, #c2bd57 25%, #f0edc2 25% 50%, #c8c34d 50% 76%, #ece7ba 76%); }
.p7 { background: linear-gradient(90deg, #efb28d 50%, #955779 50%); }
.p8 { background: linear-gradient(90deg, #cae7ab 50%, #a0d19e 50%); }
.p9 { background: linear-gradient(90deg, #f187ac 50%, #f8f5f5 50%); box-shadow: 0 0 1px #bbb; }
.p10 { background: linear-gradient(90deg, #65d863 50%, #c0f0c1 50%); }
.p11 { background: linear-gradient(90deg, #263c4a 16%, #f3f6f4 16% 32%, #419984 32% 50%, #8db978 50% 62%, #e5a057 62% 82%, #d9674d 82%); }

.scrollbar { flex: none; display: flex; flex-direction: column; align-items: center; gap: 3px; width: 10px; padding: 3px 0 1px; background: #fcfcfc; }
.track { flex: 1; padding-top: 28px; }
.thumb { width: 6px; height: 138px; border-radius: 3px; background: #8a8a8a; }

/* Taskbar */
.taskbar { flex: none; display: grid; grid-template-columns: 1fr auto 1fr; align-items: center; height: 33px; border-top: 1px solid #c5bfd0; background: linear-gradient(90deg, #d9dfea 0, #d9dcea 8%, #e8d5ea 17%, #e6d6ec 22%, #dadfec 27%, #e5d7ec 31%, #d5e3ee 38%, #d8e4ef 52%, #e7d6e9 57%, #e0dcea 61%, #d7e3ed 67%, #dfdeea 76%, #e2e0ea 100%); font-family: "Noto Sans", sans-serif; font-size: 8px; color: #2a2a33; }
.weather { display: flex; align-items: center; gap: 1px; padding-left: 12px; }
.badge-num { font-size: 8px; fill: #fff; }
.two-line { display: flex; flex-direction: column; line-height: 11px; white-space: nowrap; }
.dim { color: #60616b; }
.dock { display: flex; align-items: center; height: 100%; }
.start-btn { width: 29px; }
.search { display: flex; align-items: center; gap: 6px; width: 144px; height: 20px; margin: 0 4px 0 2px; padding: 0 3px 0 7px; border-radius: 10px; background: #f8f9fc; }
.search input { flex: 1; min-width: 0; padding: 0; border: 0; background: none; outline: 0; font-size: 9px; }
.search input::placeholder { color: #5e5f68; }
.apps { display: grid; grid-template-columns: repeat(12, 1fr); width: 352px; height: 28px; }
.apps button { position: relative; border-radius: 3px; }
.current { background: #f3f0f6; }
.current::after, .running::after { content: ""; position: absolute; bottom: 0; width: 4px; height: 1px; background: #777; }
.current::after { width: 10px; height: 2px; background: #1b6fb8; }
.tray { display: flex; align-items: center; justify-content: flex-end; gap: 4px; padding-right: 13px; }
.tray-icons { display: grid; grid-template-columns: repeat(8, 1fr); justify-items: center; align-items: center; width: 170px; }
.kb { align-items: center; width: 22px; margin: 0 2px 0 0; }
.clock { align-items: flex-end; width: 50px; }
```
